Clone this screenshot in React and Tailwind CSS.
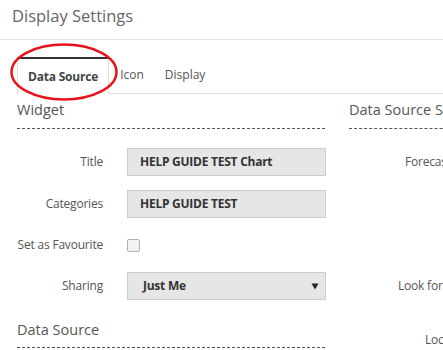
import React from "react";

const font = { fontFamily: '"Open Sans", "Liberation Sans", sans-serif' };

function Row({ label, children, className = "" }) {
  return (
    <div className={`flex items-center h-[28px] ${className}`}>
      <div className="w-[86px] shrink-0 text-right text-[12px] tracking-[-0.2px] text-[#555] whitespace-nowrap">{label}</div>
      <div className="ml-[24px] flex items-center">{children}</div>
    </div>
  );
}

function Field({ value }) {
  return (
    <div className="w-[199px] h-[28px] border border-[#cccccc] bg-[#e6e6e6] pl-[12px] flex items-center text-[12px] tracking-[-0.25px] font-bold text-[#333] whitespace-nowrap">
      {value}
    </div>
  );
}

export default function App() {
  return (
    <div className="relative w-[443px] h-[350px] overflow-hidden bg-white" style={font}>
      <div className="h-[40px] border-b border-[#e5e5e5] pl-[12px] pt-[4px]">
        <div className="text-[16.5px] leading-[24px] text-[#666]">Display Settings</div>
      </div>

      <div className="pt-[17px] pl-[17px]">
        <div className="flex border-b border-[#dddddd] h-[37px]">
          <div className="-mb-px h-[37px] bg-white border-t-2 border-t-[#333] border-x border-x-[#dddddd] px-[10px] flex items-center text-[12px] tracking-[-0.2px] font-bold text-[#444]">
            Data Source
          </div>
          <div className="px-[11px] flex items-center text-[12px] text-[#555]">Icon</div>
          <div className="px-[10px] flex items-center text-[12px] text-[#555]">Display</div>
        </div>
      </div>

      <div className="flex pl-[17px] gap-[24px]">
        <div className="w-[308px] shrink-0">
          <div className="h-[35px] pt-[4px] border-b border-dashed border-[#555]">
            <div className="text-[14.5px] leading-[24px] text-[#555]">Widget</div>
          </div>
          <Row label="Title" className="mt-[19px]">
            <Field value="HELP GUIDE TEST Chart" />
          </Row>
          <Row label="Categories" className="mt-[14px]">
            <Field value="HELP GUIDE TEST" />
          </Row>
          <Row label="Set as Favourite" className="mt-[13px]">
            <div className="w-[13px] h-[13px] border border-[#b0b0b0] rounded-[2px] bg-[#f2f2f2]" />
          </Row>
          <Row label="Sharing" className="mt-[13px]">
            <div className="w-[199px] h-[28px] border border-[#cccccc] bg-[#e6e6e6] pl-[15px] pr-[6px] flex items-center justify-between text-[12px] tracking-[-0.25px] font-bold text-[#333]">
              <span>Just Me</span>
              <svg width="8" height="7" viewBox="0 0 8 7">
                <path d="M0.5 0.5 H7.5 L4 6.5 Z" fill="#222" />
              </svg>
            </div>
          </Row>
          <div className="mt-[18px] h-[30px] border-b border-dashed border-[#555]">
            <div className="text-[14.5px] leading-[24px] text-[#555]">Data Source</div>
          </div>
        </div>

        <div className="w-[300px] shrink-0">
          <div className="h-[35px] pt-[4px] border-b border-dashed border-[#555]">
            <div className="text-[14.5px] leading-[24px] text-[#555] whitespace-nowrap">Data Source Settings</div>
          </div>
          <div className="mt-[19px] h-[28px] flex items-center pl-[56px] text-[12px] tracking-[-0.2px] text-[#555] whitespace-nowrap">Forecast Type</div>
          <div className="mt-[96px] h-[28px] flex items-center pl-[49px] text-[12px] tracking-[-0.2px] text-[#555] whitespace-nowrap">Look for Data</div>
          <div className="mt-[26px] h-[28px] flex items-center pl-[76px] text-[12px] tracking-[-0.2px] text-[#555] whitespace-nowrap">Location</div>
        </div>
      </div>

      <svg className="absolute left-0 top-0 pointer-events-none" width="443" height="350">
        <ellipse cx="64" cy="72" rx="52.5" ry="27.5" fill="none" stroke="#e3141c" strokeWidth="2.5" />
      </svg>
    </div>
  );
}
